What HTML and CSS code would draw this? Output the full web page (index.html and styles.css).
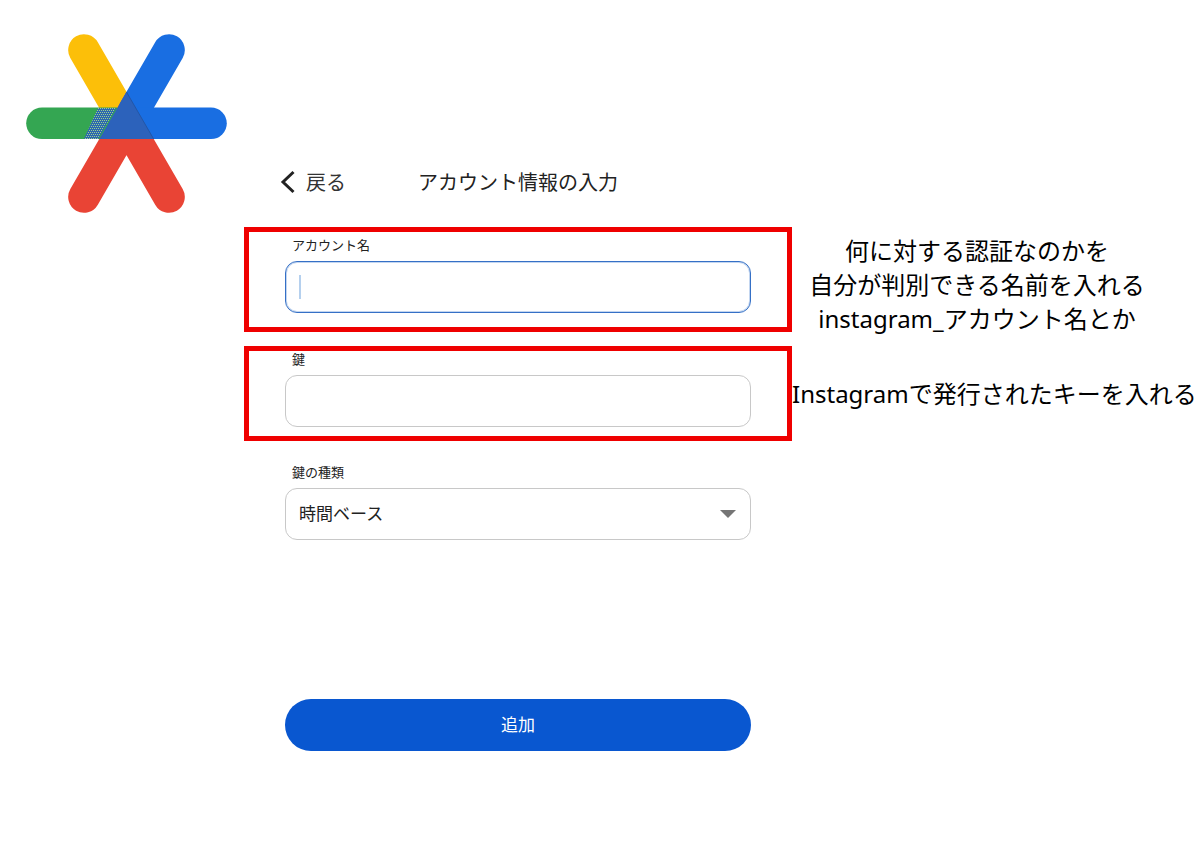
FILE: index.html
```html
<!DOCTYPE html>
<html lang="ja">
<head>
<meta charset="utf-8">
<meta name="viewport" content="width=device-width, initial-scale=1">
<title>アカウント情報の入力</title>
<link rel="stylesheet" href="styles.css">
</head>
<body>
<form class="page">
  <div class="logo">
    <svg class="logo-mark" viewBox="26 34 202 179" aria-hidden="true">
      <g fill="none" stroke-width="31.6" stroke-linecap="round">
        <path d="M84 50L126.500 123.500" stroke="#fcbf09"/>
        <path d="M84 197L126.500 123.500L169 197" stroke="#e94435"/>
        <path d="M169 50L134 110.500" stroke="#196ee2"/>
        <path d="M211 123.300H140" stroke="#196ee2"/>
      </g>
      <path d="M42 107.500H117L99 139.100H42A15.800 15.800 0 0 1 42 107.500Z" fill="#34a652"/>
      <clipPath id="overlap"><path d="M98 108H117L99 139H84Z"/></clipPath>
      <g clip-path="url(#overlap)">
        <path d="M84 108H118V139H84Z" fill="#2b68b0"/>
        <path d="M84 108.500H118M84 112.500H118M84 116.500H118M84 120.500H118M84 124.500H118M84 128.500H118M84 132.500H118M84 136.500H118" stroke="#9fd08c" stroke-dasharray="1 1"/>
        <path d="M85 110.500H118M85 114.500H118M85 118.500H118M85 122.500H118M85 126.500H118M85 130.500H118M85 134.500H118M85 138.500H118" stroke="#9fd08c" stroke-dasharray="1 1"/>
      </g>
      <path d="M117 108L99 139" fill="none" stroke="#34a652" stroke-width="1.500"/>
      <path d="M126.500 92L99.300 139.100H153.700Z" fill="#2c62bb"/>
      <path d="M126.500 92L153.700 139.100" fill="none" stroke="#2256a8" stroke-width="1"/>
    </svg>
  </div>

  <header class="bar">
    <button class="back" type="button">
      <svg class="chevron" viewBox="0 0 16 24" aria-hidden="true"><path d="M13.500 2L3 12L13.500 22"/></svg>
      <span>戻る</span>
    </button>
    <h1 class="title">アカウント情報の入力</h1>
  </header>

  <div class="field marked roomy">
    <label class="label" for="account">アカウント名</label>
    <div class="control caret"><input class="box active" id="account" type="text"></div>
  </div>
  <p class="note centered">何に対する認証なのかを<br>自分が判別できる名前を入れる<br>instagram_アカウント名とか</p>

  <div class="field marked">
    <label class="label" for="key">鍵</label>
    <div class="control"><input class="box" id="key" type="text"></div>
  </div>
  <p class="note middle">Instagramで発行されたキーを入れる</p>

  <div class="field kind">
    <label class="label" for="kind">鍵の種類</label>
    <div class="control arrow">
      <select class="box" id="kind"><option>時間ベース</option></select>
    </div>
  </div>

  <div class="actions"><button class="submit" type="submit">追加</button></div>
</form>
</body>
</html>
```
FILE: styles.css
```css
* {
  box-sizing: border-box;
}

body {
  margin: 0;
  background: #fff;
  color: #222;
  font-family: "Noto Sans CJK JP", sans-serif;
}

button,
input,
select {
  font-family: inherit;
}

.page {
  display: grid;
  grid-template-columns: 244fr 548fr 408fr;
  row-gap: 14px;
}

.logo {
  grid-column: 1;
  grid-row: 1;
  padding: 34px 16px 0 26px;
}

.logo-mark {
  display: block;
  width: 100%;
}

.bar {
  grid-column: 2;
  grid-row: 1;
  align-self: end;
  display: grid;
  grid-template-columns: 1fr auto 1fr;
  padding: 0 36px 19px;
}

.back {
  display: flex;
  align-items: center;
  justify-self: start;
  gap: 10px;
  padding: 0;
  border: 0;
  background: none;
  color: #333;
  font-size: 20px;
  line-height: 24px;
}

.chevron {
  width: 16px;
  height: 24px;
  fill: none;
  stroke: #222;
  stroke-width: 3;
}

.title {
  margin: 0;
  font-size: 20px;
  font-weight: 400;
  line-height: 24px;
}

.field {
  grid-column: 2;
  display: flex;
  flex-direction: column;
  gap: 8px;
  padding: 0 36px 9px;
  border: 5px solid transparent;
}

.marked {
  border-color: #ef0000;
}

.roomy {
  padding-top: 5px;
  padding-bottom: 14px;
}

.kind {
  padding-top: 4px;
}

.label {
  padding-left: 7px;
  font-size: 13px;
  line-height: 16px;
}

.control {
  position: relative;
}

.box {
  display: block;
  width: 100%;
  height: 52px;
  padding: 0 13px 3px;
  border: 1px solid #c8c8c8;
  border-radius: 12px;
  outline: 0;
  background: #fff;
  color: #222;
  font-size: 17px;
  appearance: none;
}

.active {
  border-color: #3570c6;
  box-shadow: inset 0 0 0 1px #c3d6f0;
}

.caret::after {
  content: "";
  position: absolute;
  top: 14px;
  left: 14px;
  width: 2px;
  height: 24px;
  background: #b5d0ee;
}

.arrow::after {
  content: "";
  position: absolute;
  top: 22px;
  right: 15px;
  border: 8px solid transparent;
  border-top-color: #757575;
  border-bottom: 0;
  pointer-events: none;
}

.note {
  grid-column: 3;
  margin: 0;
  color: #000;
  font-family: "Noto Sans", "Noto Sans CJK JP", sans-serif;
  font-size: 24px;
  line-height: 34px;
  white-space: nowrap;
}

.centered {
  padding: 7px 38px 0 0;
  height: 0;
  text-align: center;
}

.middle {
  align-self: center;
}

.actions {
  grid-column: 2;
  padding: 131px 41px 0;
}

.submit {
  width: 100%;
  height: 52px;
  padding: 0 0 3px;
  border: 0;
  border-radius: 26px;
  background: #0957d0;
  color: #fff;
  font-size: 17px;
}
```
